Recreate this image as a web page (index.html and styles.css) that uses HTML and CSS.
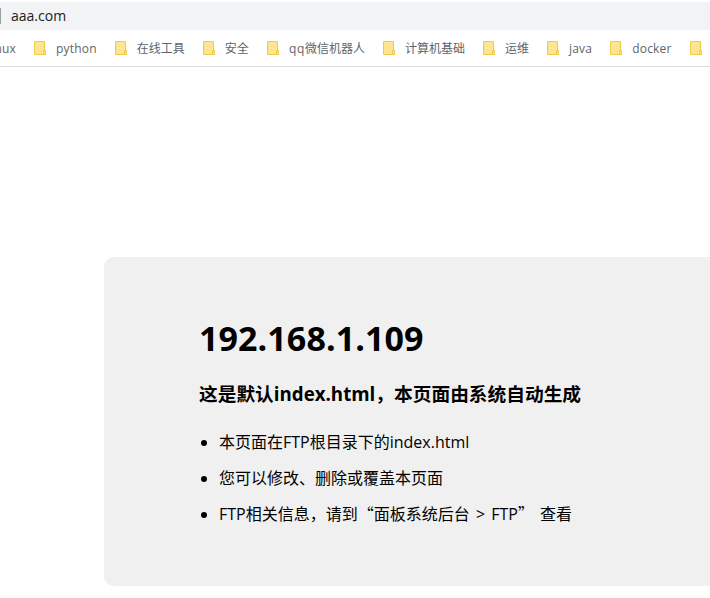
FILE: index.html
```html
<!DOCTYPE html>
<html lang="zh-CN">
<head>
<meta charset="utf-8">
<title>aaa.com</title>
<link rel="stylesheet" href="styles.css">
</head>
<body>
<svg class="defs" width="0" height="0" aria-hidden="true">
  <symbol id="folder" viewBox="0 0 12 14">
    <path d="M.5 .5H10.5V9.5H11.5V13.5H.5Z" fill="#ffe58f" stroke="#efc94c"/>
    <path d="M9.5 13.5V9.5H11.5V13.5Z" fill="#ffe58f" stroke="#efc94c"/>
  </symbol>
</svg>
<header class="browser">
  <div class="topgap"></div>
  <div class="address"><span class="sep"></span><span class="url">aaa.com</span></div>
  <nav class="bookmarks">
    <span class="mark clipped"><span class="latin">linux</span></span>
    <span class="mark"><svg class="folder"><use href="#folder"/></svg><span class="latin">python</span></span>
    <span class="mark"><svg class="folder"><use href="#folder"/></svg><span>在线工具</span></span>
    <span class="mark"><svg class="folder"><use href="#folder"/></svg><span>安全</span></span>
    <span class="mark"><svg class="folder"><use href="#folder"/></svg><span><span class="wide">qq</span>微信机器人</span></span>
    <span class="mark"><svg class="folder"><use href="#folder"/></svg><span>计算机基础</span></span>
    <span class="mark"><svg class="folder"><use href="#folder"/></svg><span>运维</span></span>
    <span class="mark"><svg class="folder"><use href="#folder"/></svg><span class="latin">java</span></span>
    <span class="mark"><svg class="folder"><use href="#folder"/></svg><span class="latin">docker</span></span>
    <span class="mark"><svg class="folder"><use href="#folder"/></svg></span>
  </nav>
</header>
<main class="page">
  <section class="card">
    <h1>192.168.1.109</h1>
    <h2>这是默认index.html，本页面由系统自动生成</h2>
    <ul>
      <li>本页面在FTP根目录下的index.html</li>
      <li>您可以修改、删除或覆盖本页面</li>
      <li class="spaced">FTP相关信息，请到<span class="cjk">“</span>面板系统后台 &gt; FTP<span class="cjk">”</span> 查看</li>
    </ul>
  </section>
</main>
</body>
</html>
```
FILE: styles.css
```css
* { box-sizing: border-box; }
html, body { margin: 0; height: 100%; overflow: hidden; background: #fff; }
body { font-family: "Open Sans", "Noto Sans CJK SC", sans-serif; color: #000; }
.defs { display: block; height: 0; }
.browser { display: flex; flex-direction: column; }
.topgap { height: 2px; background: #fff; }
.address { height: 28px; background: #f1f3f4; display: flex; align-items: center; overflow: hidden; padding-bottom: 1px; }
.sep { width: 1px; height: 16px; background: #9aa0a6; margin-right: 10px; }
.url { font-size: 14px; color: #202124; }
.bookmarks { height: 37px; border-bottom: 1px solid #dadce0; display: flex; align-items: center; gap: 18px; white-space: nowrap; overflow: hidden; }
.mark { display: inline-flex; align-items: center; gap: 10px; font-size: 12px; color: #5f6368; flex: none; }
.latin { letter-spacing: .2px; }
.wide { letter-spacing: .7px; }
.clipped { margin-left: -12px; }
.folder { width: 12px; height: 14px; flex: none; }
.page { padding: 190px 0 0 104px; }
.card { width: 700px; height: 329px; background: #f0f0f0; border-radius: 10px; padding: 58px 0 0 95px; }
h1 { margin: 0; font-size: 34px; line-height: 46px; font-weight: 700; letter-spacing: .08px; }
h2 { margin: 20px 0 0; font-size: 18.72px; line-height: 25px; font-weight: 700; }
ul { margin: 24px 0 0; padding: 0 0 0 20px; font-size: 16px; }
li { line-height: 24px; margin-bottom: 12px; }
.spaced { word-spacing: 2px; }
.cjk { font-family: "Noto Sans CJK SC", sans-serif; line-height: 1; }
```
